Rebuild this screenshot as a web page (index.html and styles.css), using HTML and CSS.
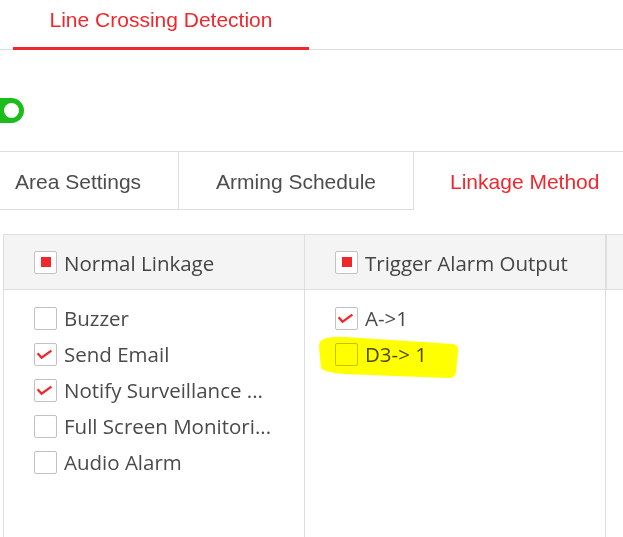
FILE: index.html
```html
<!DOCTYPE html>
<html>
<head>
    <title>Line Crossing Detection</title>
    <link rel="stylesheet" href="styles.css">
</head>
<body>
    <div class="top-tabs">
        <div class="top-tab active">Line Crossing Detection</div>
    </div>

    <div class="switch-row">
        <span class="switch on"><span class="knob"></span></span>
    </div>

    <div class="tabs">
        <div class="tab">Area Settings</div>
        <div class="tab">Arming Schedule</div>
        <div class="tab active">Linkage Method</div>
    </div>

    <div class="linkage-table">
        <div class="col">
            <div class="col-head">
                <span class="box partial"></span>
                <span class="label">Normal Linkage</span>
            </div>
            <div class="col-body">
                <div class="item"><span class="box"></span><span class="label">Buzzer</span></div>
                <div class="item">
                    <span class="box"><svg class="tick" width="21" height="21" viewBox="0 0 21 21"><polyline points="2.6,9.2 6.6,13.8 16.4,6.6"/></svg></span>
                    <span class="label">Send Email</span>
                </div>
                <div class="item">
                    <span class="box"><svg class="tick" width="21" height="21" viewBox="0 0 21 21"><polyline points="2.6,9.2 6.6,13.8 16.4,6.6"/></svg></span>
                    <span class="label">Notify Surveillance ...</span>
                </div>
                <div class="item"><span class="box"></span><span class="label">Full Screen Monitori...</span></div>
                <div class="item"><span class="box"></span><span class="label">Audio Alarm</span></div>
            </div>
        </div>
        <div class="col">
            <div class="col-head">
                <span class="box partial"></span>
                <span class="label">Trigger Alarm Output</span>
            </div>
            <div class="col-body">
                <div class="item">
                    <span class="box"><svg class="tick" width="21" height="21" viewBox="0 0 21 21"><polyline points="2.6,9.2 6.6,13.8 16.4,6.6"/></svg></span>
                    <span class="label">A-&gt;1</span>
                </div>
                <div class="item"><span class="box"></span><span class="label">D3-&gt; 1</span></div>
                <!-- marker highlight drawn over the screenshot -->
                <svg class="marker" width="170" height="100" viewBox="0 0 170 100">
                    <path d="M 19 49 Q 27 46 40 47 L 148 54 Q 154 55 153 61 L 151 82 Q 150 88 144 88 L 38 84 Q 19 82 16 78 L 14 57 Q 14 50 19 49 Z" fill="#ffff00"/>
                </svg>
            </div>
        </div>
        <div class="col last">
            <div class="col-head"></div>
            <div class="col-body"></div>
        </div>
    </div>
</body>
</html>
```

FILE: styles.css
```css
html, body {
    margin: 0;
    padding: 0;
    overflow: hidden;
    background: #fff;
}

body {
    font-family: "Liberation Sans", Arial, sans-serif;
    color: #4d4d4d;
    width: 623px;
    height: 537px;
}

/* top detection tab */
.top-tabs {
    height: 49px;
    border-bottom: 1px solid #dedede;
    display: flex;
}

.top-tab {
    box-sizing: border-box;
    margin-left: 13px;
    width: 296px;
    height: 50px;
    line-height: 40px;
    text-align: center;
    font-size: 21px;
    border-bottom: 3px solid transparent;
}

.top-tab.active {
    color: #f0282d;
    border-bottom-color: #f0282d;
}

/* enable switch */
.switch-row {
    padding-top: 48px;
    padding-bottom: 28px;
}

.switch {
    display: flex;
    align-items: center;
    justify-content: flex-end;
    box-sizing: border-box;
    width: 50px;
    height: 25px;
    margin-left: -26px;
    padding-right: 5px;
    border-radius: 13px;
    background: #1cbc1c;
}

.switch .knob {
    width: 15px;
    height: 15px;
    border-radius: 50%;
    background: #fff;
}

/* sub tabs */
.tabs {
    display: flex;
    border-top: 1px solid #dedede;
    white-space: nowrap;
}

.tab {
    flex: none;
    height: 57px;
    line-height: 59px;
    padding: 0 37px;
    font-size: 21px;
    border-right: 1px solid #dedede;
    border-bottom: 1px solid #dedede;
}

.tab:first-child {
    margin-left: -22px;
}

.tab.active {
    color: #f0282d;
    border-right: none;
    border-bottom-color: transparent;
    padding-left: 36px;
}

/* linkage table */
.linkage-table {
    display: flex;
    margin-top: 24px;
    margin-left: 3px;
    border-top: 1px solid #dedede;
    font-family: "Open Sans", "Noto Sans", sans-serif;
    font-size: 20.5px;
}

.col {
    flex: none;
    width: 300px;
    border-left: 1px solid #dedede;
}

.col.last {
    width: 40px;
}

.col.last .col-head {
    border-left: 1px solid #dedede;
}

.col-head {
    display: flex;
    align-items: center;
    height: 54px;
    padding-left: 30px;
    background: #f4f4f4;
    border-bottom: 1px solid #dedede;
    color: #444;
}

.col-head .label {
    padding-top: 2px;
}

.col-body {
    position: relative;
    height: 260px;
    padding-top: 10px;
    color: #4a4a4a;
}

.item {
    display: flex;
    align-items: center;
    height: 36px;
    padding-left: 30px;
}

.box {
    flex: none;
    position: relative;
    box-sizing: border-box;
    width: 23px;
    height: 23px;
    margin-right: 7px;
    border: 1px solid #c2c2c2;
    border-radius: 2px;
    background: #fff;
}

.box.partial::after {
    content: "";
    position: absolute;
    left: 6px;
    top: 5px;
    width: 10px;
    height: 10px;
    background: #f0282d;
}

.tick {
    display: block;
}

.tick polyline {
    fill: none;
    stroke: #f0282d;
    stroke-width: 2.3;
}

.label {
    white-space: nowrap;
}

.marker {
    position: absolute;
    left: 0;
    top: 0;
    mix-blend-mode: multiply;
}
```
